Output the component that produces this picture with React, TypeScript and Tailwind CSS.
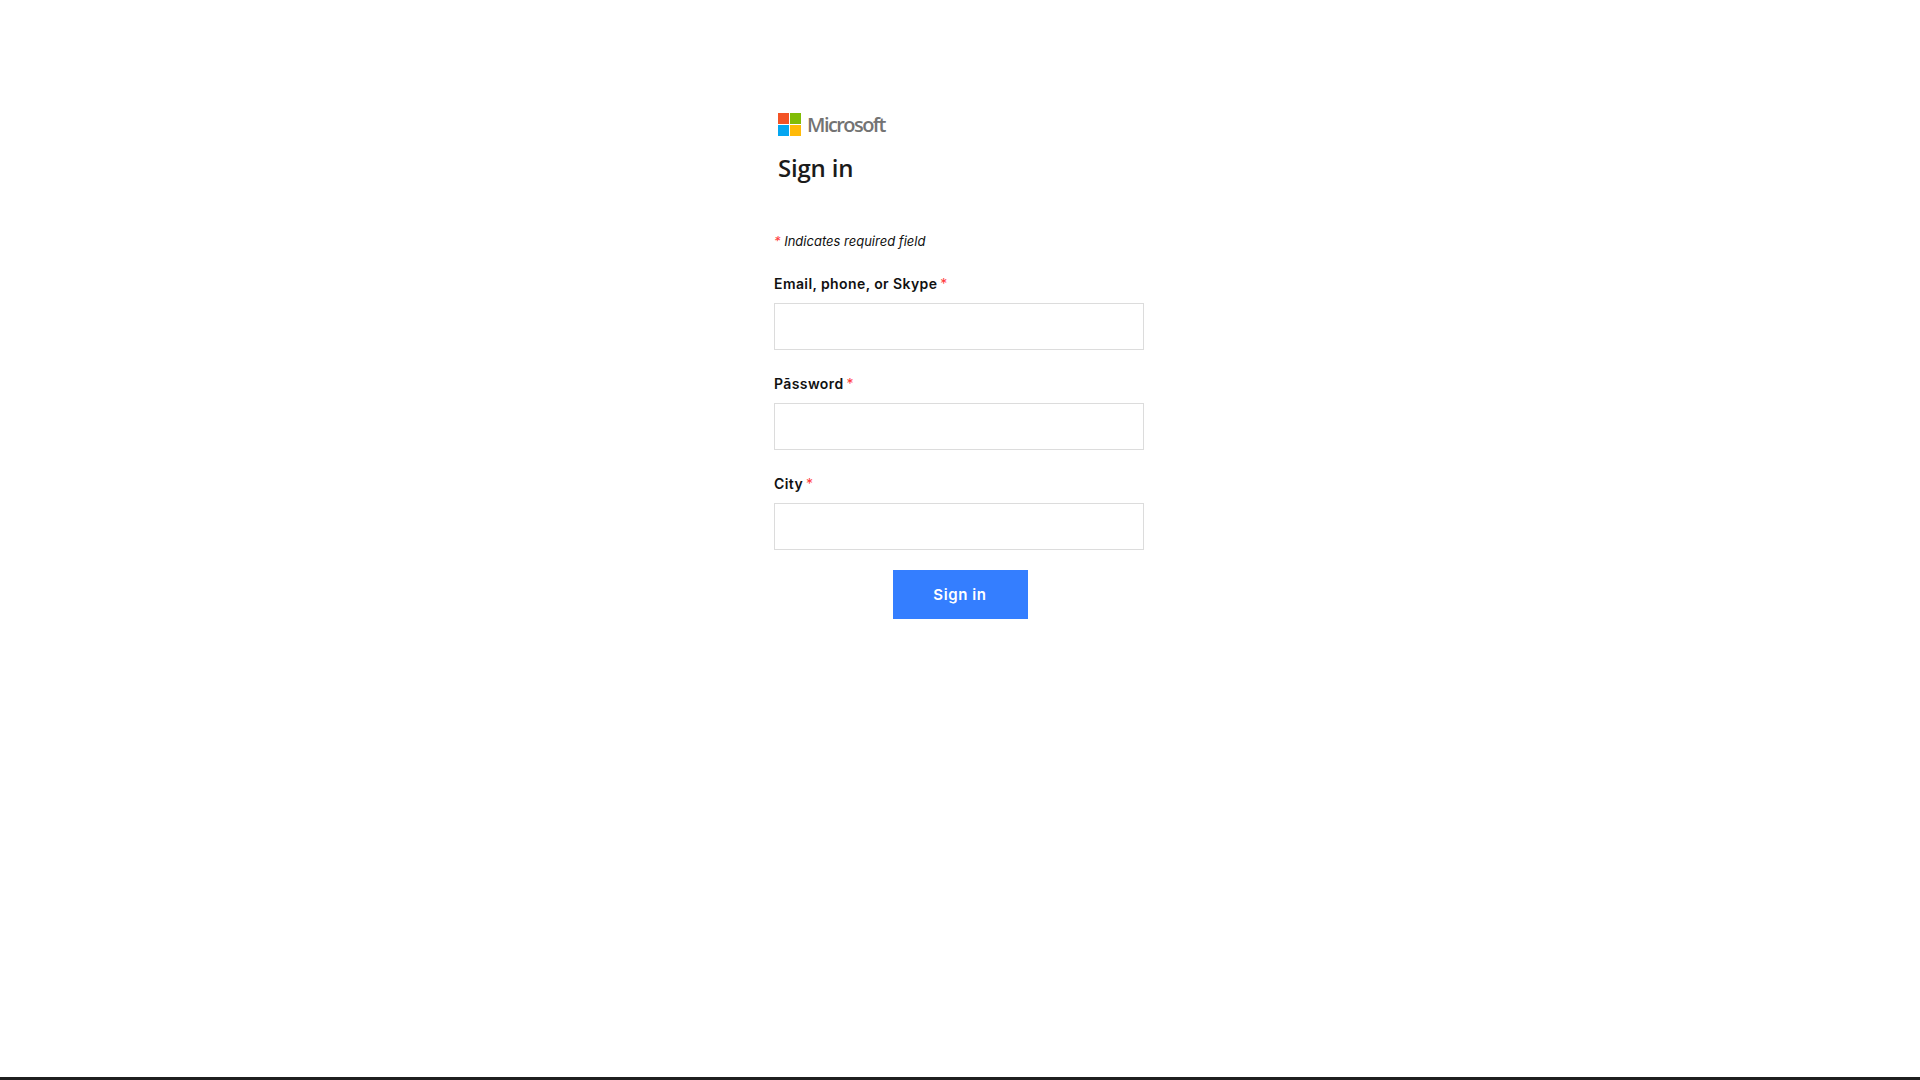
export default function App() {
  const fields = ["Email, phone, or Skype", "Pāssword", "City"];
  return (
    <div className="flex h-[1080px] flex-col bg-white font-['Inter','Liberation_Sans',sans-serif]">
      <main className="mx-auto flex w-[372px] flex-1 flex-col pt-[113px]">
        <div className="ml-1 flex h-[23px] items-center">
          <svg width="23" height="23" viewBox="0 0 23 23" className="shrink-0">
            <rect x="0" y="0" width="11" height="11" fill="#f35325" />
            <rect x="12" y="0" width="11" height="11" fill="#81bc06" />
            <rect x="0" y="12" width="11" height="11" fill="#05a6f0" />
            <rect x="12" y="12" width="11" height="11" fill="#ffba08" />
          </svg>
          <span className="ml-[6px] font-['Open_Sans',sans-serif] text-[20px] font-semibold leading-[23px] tracking-[-1.55px] text-[#737373]">
            Microsoft
          </span>
        </div>
        <h1 className="ml-1 mt-[16px] font-['Open_Sans',sans-serif] text-[24px] font-semibold leading-[32px] tracking-[-0.2px] text-[#1b1b1b]">
          Sign in
        </h1>
        <p className="mt-[47px] h-[20px] text-[13px] italic leading-[20px] text-[#111]">
          <span className="text-[#ff3b3b]">*</span> Indicates required field
        </p>
        <form className="mt-[24px] flex flex-col">
          {fields.map((label) => (
            <div key={label} className="mb-[25px] flex flex-col">
              <label className="h-[22px] text-[14px] font-semibold leading-[18px] tracking-[0.4px] text-[#111]">
                {label} <span className="ml-[-1px] font-normal text-[#ff3b3b]">*</span>
              </label>
              <input className="mt-[6px] h-[47px] w-[370px] border border-[#dcdcdc] bg-white" />
            </div>
          ))}
          <button
            type="button"
            className="mx-auto -mt-[5px] h-[49px] w-[135px] bg-[#347eff] pt-[2px] text-[15px] font-semibold tracking-[0.6px] text-white"
          >
            Sign in
          </button>
        </form>
      </main>
      <div className="h-[3px] bg-[#1f1f1f]" />
    </div>
  );
}
